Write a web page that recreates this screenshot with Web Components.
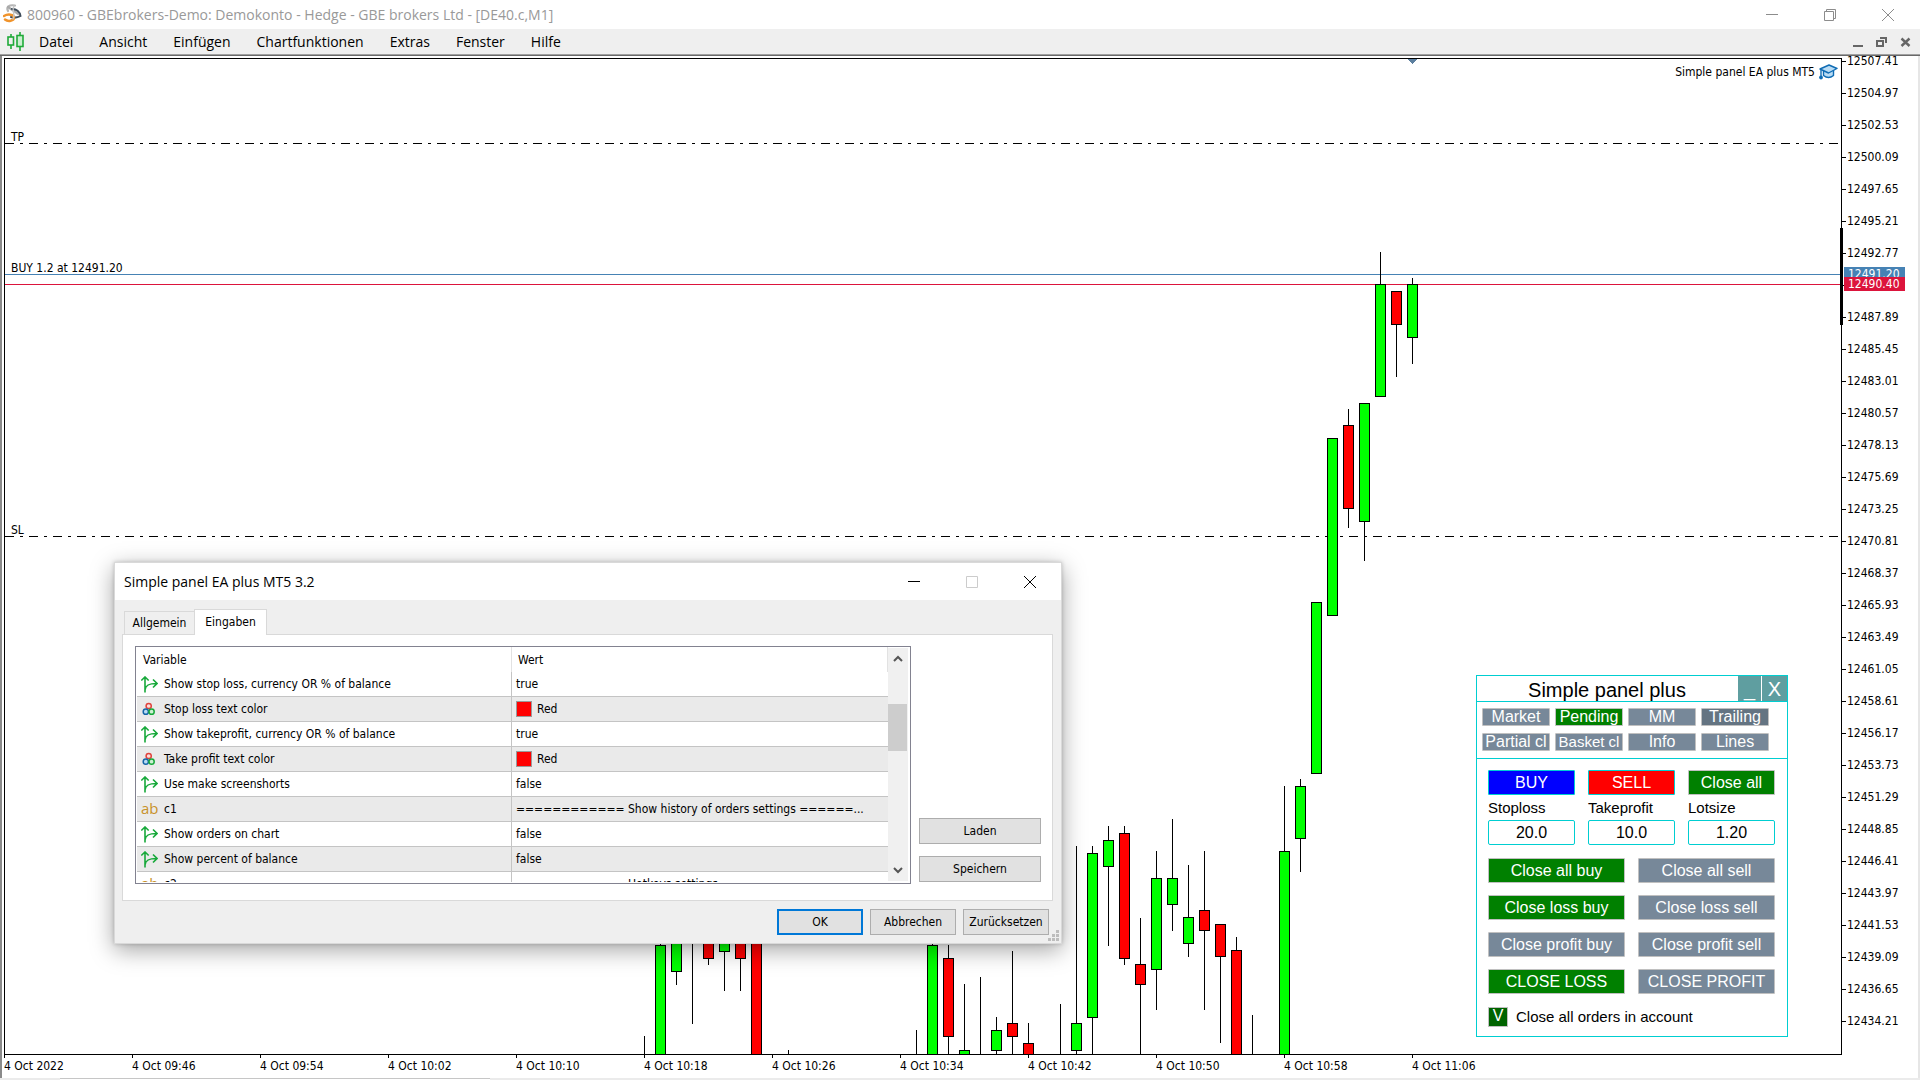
<!DOCTYPE html>
<html lang="de">
<head>
<meta charset="utf-8">
<title>800960 - GBEbrokers-Demo</title>
<style>
  html, body { margin: 0; height: 100%; }
  body { background: #fff; color: #000; overflow: hidden; font-family: "DejaVu Sans Condensed", "DejaVu Sans", sans-serif; font-size: 12px; }
</style>
</head>
<body>
<terminal-app></terminal-app>

<template id="t-app">
  <style>
    :host { display: flex; flex-direction: column; height: 100vh; position: relative; }
    price-chart { flex: 1; min-height: 0; }
    settings-dialog { position: absolute; left: 114px; top: 562px; }
    trade-panel { position: absolute; left: 1476px; top: 675px; }
    .strip { display: flex; height: 2px; background: #ebebeb; padding-left: 60px; }
    .strip i { width: 430px; background: #fff; border-top: 1px solid #c6c6c6; box-sizing: border-box; }
  </style>
  <app-titlebar>800960 - GBEbrokers-Demo: Demokonto - Hedge - GBE brokers Ltd - [DE40.c,M1]</app-titlebar>
  <app-menubar></app-menubar>
  <price-chart></price-chart>
  <div class="strip"><i></i></div>
  <trade-panel></trade-panel>
  <settings-dialog></settings-dialog>
</template>

<template id="t-titlebar">
  <style>
    :host { display: flex; align-items: center; height: 29px; background: #fff; color: #999; font: 15px/29px "Open Sans", "Noto Sans", sans-serif; }
    .logo { margin: 0 5px 4px 3px; }
    .name { flex: 1; font-size: 14px; line-height: 28px; white-space: nowrap; }
    button { border: 0; background: none; padding: 0; width: 58px; height: 28px; display: grid; place-items: center; }
    .caps { display: flex; padding-right: 3px; }
  </style>
  <svg class="logo" width="19" height="20" viewBox="0 0 19 20" fill="none" stroke-linecap="round">
    <path d="M5 8C3 4 6 1.500 12 2.500" stroke="#b5b5b5" stroke-width="2.200"/>
    <path d="M5 4C8 6 12 8.500 15 11" stroke="#a9a9a9" stroke-width="2.200"/>
    <path d="M9 6C13 5.500 17 9 17.500 13C14 15 11 15 8 14" stroke="#3d4b59" stroke-width="2"/>
    <path d="M1 13C5 10.500 11 11.500 11 14.500C11 18 5 19 2 16.500" stroke="#f0932b" stroke-width="2.500"/>
    <path d="M11 3C8 7 13 10 10 16" stroke="#c5c5c5" stroke-width="1.500"/>
  </svg>
  <span class="name"><slot></slot></span>
  <div class="caps">
    <button aria-label="Minimieren"><svg width="12" height="12" stroke="#8c8c8c"><path d="M0 5.500H12"/></svg></button>
    <button aria-label="Wiederherstellen"><svg width="12" height="12" fill="none" stroke="#8c8c8c"><path d="M.5 2.500H9.500V11.500H.5ZM2.500 2.500V.5H11.500V9.500H9.500"/></svg></button>
    <button aria-label="Schließen"><svg width="12" height="12" stroke="#8c8c8c"><path d="M0 0L12 12M12 0L0 12"/></svg></button>
  </div>
</template>

<template id="t-menubar">
  <style>
    :host { display: flex; align-items: center; height: 25px; background: #efefef; border-bottom: 1px solid #a0a0a0; box-shadow: 0 1px #696969; margin-bottom: 1px; }
    .doc { margin: 0 2px 0 7px; }
    nav { flex: 1; display: flex; }
    nav button { border: 0; background: none; padding: 0 13px; color: #000; font: 14px/24px "Open Sans", "Noto Sans", sans-serif; }
    .mdi { display: flex; gap: 13px; padding-right: 9px; }
    .mdi button { border: 0; background: none; padding: 0; width: 11px; height: 12px; display: grid; }
  </style>
  <svg class="doc" width="17" height="20" viewBox="0 0 17 20" fill="#efefef" stroke="#1faa38" stroke-width="1.600">
    <path d="M4 2V17"/><rect x="1" y="5" width="5.500" height="8"/>
    <path d="M13 0V19"/><rect x="10" y="3.500" width="6" height="11" fill="#c9efcf"/>
  </svg>
  <nav>
    <button>Datei</button><button>Ansicht</button><button>Einfügen</button><button>Chartfunktionen</button><button>Extras</button><button>Fenster</button><button>Hilfe</button>
  </nav>
  <div class="mdi">
    <button aria-label="Minimieren"><svg width="11" height="12"><path d="M1 10H11" stroke="#666" stroke-width="2"/></svg></button>
    <button aria-label="Wiederherstellen"><svg width="11" height="12" fill="none" stroke="#666" stroke-width="2"><path d="M1 5H7V10H1ZM4 2H10V7"/></svg></button>
    <button aria-label="Schließen"><svg width="11" height="12" stroke="#666" stroke-width="2.400"><path d="M1.500 2.500L9.500 10M9.500 2.500L1.500 10"/></svg></button>
  </div>
</template>

<template id="t-chart">
  <style>
    :host { display: grid; grid-template-columns: 1fr 76px; grid-template-rows: 1fr 23px; padding: 2px 0 0 2px; border-left: 2px solid #8a8a8a; border-right: 2px solid #e6e6e6; background: #fff; }
    .plot { position: relative; border: 1px solid #000; min-width: 0; min-height: 0; overflow: hidden; }
    .plot > svg { position: absolute; inset: 0; width: 100%; height: 100%; shape-rendering: crispEdges; }
    .expert { position: absolute; right: 3px; top: 5px; display: flex; align-items: center; gap: 4px; line-height: 16px; }
    .prices { position: relative; }
    .ladder { margin: -13px 0 0; padding: 0; list-style: none; }
    .ladder li { display: flex; align-items: center; height: 32px; gap: 1px; }
    .ladder li::before { content: ""; width: 4px; height: 1px; background: #000; }
    .range { position: absolute; left: -2px; top: 170px; width: 3px; height: 97px; background: #000; }
    .tag { position: absolute; left: 2px; width: 57px; padding-left: 4px; height: 14px; line-height: 14px; color: #fff; }
    .open { top: 209px; background: #4682b4; }
    .bid { top: 219px; background: #dc143c; }
    .times { grid-column: 1 / 3; display: flex; margin: 0; padding: 0; list-style: none; }
    .times li { flex: 0 0 128px; line-height: 16px; }
    .times li::before { content: ""; display: block; width: 1px; height: 3px; background: #000; }
  </style>
  <div class="plot">
    <svg><g class="levels"></g><g class="candles"></g><path d="M1402 0H1412L1407 5Z" fill="#5c7f9f"/></svg>
    <div class="expert"><span>Simple panel EA plus MT5</span>
      <svg width="19" height="16" viewBox="0 0 19 16" fill="#b9dcf5" stroke="#0f6cb4" stroke-width="1.400" stroke-linejoin="round">
        <path d="M4.500 6V11.500Q9.500 15.500 14.500 11.500V6"/><path d="M1 5L10 1L18 4.500L9.500 9Z"/><path d="M2 5.500V12" fill="none"/><circle cx="2" cy="13.500" r="1.200" fill="#0f6cb4"/>
      </svg></div>
  </div>
  <div class="prices">
    <ul class="ladder"></ul>
    <div class="range"></div>
    <div class="tag open">12491.20</div>
    <div class="tag bid">12490.40</div>
  </div>
  <ul class="times"></ul>
</template>

<template id="t-dialog">
  <style>
    :host { display: flex; flex-direction: column; width: 948px; height: 382px; box-sizing: border-box; border: 1px solid #d9d9d9; background: #efefef; box-shadow: 0 6px 22px rgba(0,0,0,.36), 0 0 4px rgba(0,0,0,.2); }
    header { display: flex; align-items: center; height: 37px; background: #fff; padding-left: 9px; }
    h1 { flex: 1; margin: 0; font: 14px/36px "Open Sans", "Noto Sans", sans-serif; }
    header button { width: 58px; height: 24px; border: 0; padding: 0; background: none; display: grid; place-items: center; }
    .caps { display: flex; padding-right: 2px; }
    .tabs { display: flex; align-items: flex-end; padding: 8px 9px 0; height: 26px; }
    .tabs button { position: relative; box-sizing: border-box; height: 23px; width: 71px; margin-right: -1px; padding: 0; border: 1px solid #d9d9d9; border-bottom: 0; background: #efefef; font: inherit; line-height: 22px; color: #000; }
    .tabs .on { height: 26px; width: 73px; background: #fff; z-index: 1; margin-bottom: -1px; padding-bottom: 2px; }
    .page { display: flex; gap: 8px; box-sizing: border-box; height: 267px; margin: 0 8px 0 7px; border: 1px solid #d9d9d9; background: #fff; padding: 11px 11px 16px 12px; }
    .list { flex: 1; display: flex; box-sizing: border-box; border: 1px solid #828290; padding: 0 1px 1px 0; overflow: hidden; }
    .view { flex: 1; overflow: hidden; padding-left: 1px; }
    table { width: 100%; table-layout: fixed; border-collapse: separate; border-spacing: 0; }
    th, td { box-sizing: border-box; height: 25px; padding: 0; text-align: left; font-weight: normal; line-height: 24px; white-space: nowrap; overflow: hidden; }
    th { padding-left: 6px; border-right: 1px solid #e2e2e2; }
    td { border-bottom: 1px solid #c4c4c4; padding-left: 4px; }
    td:first-child { border-right: 1px solid #c4c4c4; }
    tr:nth-child(even) td { background: #eaeaea; }
    td div { display: flex; align-items: center; height: 24px; gap: 6px; }
    td:last-child div { gap: 5px; }
    td i { display: block; flex: none; width: 17px; height: 17px; }
    td i svg { display: block; }
    td i.ab { font: 15px/15px "Open Sans", sans-serif; color: #c8922a; }
    .swatch { width: 14px; height: 14px; background: #f00; border: 1px solid #9a9a9a; }
    .bar { width: 20px; background: #f0f0f0; margin: 1px 1px 1px 0; display: flex; flex-direction: column; justify-content: space-between; align-items: center; position: relative; padding: 7px 0; box-sizing: border-box; }
    .thumb { position: absolute; top: 56px; left: 0; width: 19px; height: 47px; background: #cdcdcd; }
    .side { display: flex; flex-direction: column; justify-content: flex-end; gap: 12px; width: 122px; padding-bottom: 2px; }
    .cmd { box-sizing: border-box; height: 26px; padding: 0; border: 1px solid #adadad; background: #e1e1e1; font: inherit; color: #000; }
    footer { display: flex; justify-content: flex-end; gap: 7px; padding: 8px 12px 0 0; }
    footer .cmd { width: 86px; }
    footer .ok { border: 2px solid #0078d7; }
    .grip { position: absolute; right: 2px; bottom: 2px; }
  </style>
  <header><h1>Simple panel EA plus MT5 3.2</h1>
    <div class="caps">
      <button aria-label="Minimieren"><svg width="12" height="12" stroke="#000"><path d="M0 5.500H12"/></svg></button>
      <button aria-label="Maximieren" disabled><svg width="12" height="12" fill="none" stroke="#ccc"><path d="M.5 .5H11.500V11.500H.5Z"/></svg></button>
      <button aria-label="Schließen"><svg width="12" height="12" stroke="#000"><path d="M0 0L12 12M12 0L0 12"/></svg></button>
    </div>
  </header>
  <div class="tabs"><button>Allgemein</button><button class="on">Eingaben</button></div>
  <div class="page">
    <div class="list">
      <div class="view"><table>
        <colgroup><col style="width:375px"><col></colgroup>
        <thead><tr><th>Variable</th><th>Wert</th></tr></thead><tbody></tbody>
      </table></div>
      <div class="bar">
        <svg width="10" height="7" fill="none" stroke="#555" stroke-width="2"><path d="M1 6L5 2L9 6"/></svg>
        <div class="thumb"></div>
        <svg width="10" height="7" fill="none" stroke="#555" stroke-width="2"><path d="M1 1L5 5L9 1"/></svg>
      </div>
    </div>
    <div class="side"><button class="cmd">Laden</button><button class="cmd">Speichern</button></div>
  </div>
  <footer><button class="cmd ok">OK</button><button class="cmd">Abbrechen</button><button class="cmd">Zurücksetzen</button></footer>
  <svg class="grip" width="11" height="11" fill="#bdbdbd"><path d="M8 0h3v3h-3zM4 4h3v3h-3zM8 4h3v3h-3zM0 8h3v3h-3zM4 8h3v3h-3zM8 8h3v3h-3z"/></svg>
</template>

<template id="t-button">
  <style>
    :host { display: block; height: 25px; --bg: #778899; --edge: #c0c0c0; }
    :host([tone=green]) { --bg: #008000; }
    :host([tone=dark]) { --bg: #647482; }
    :host([tone=buy]) { --bg: #0000ff; --edge: #00ced1; }
    :host([tone=sell]) { --bg: #ff0000; --edge: #00ced1; }
    button { box-sizing: border-box; width: 100%; height: 100%; padding: 0; border: 1px solid var(--edge); border-radius: 1px; background: var(--bg); color: #fff; font: inherit; line-height: 16px; white-space: nowrap; display: flex; align-items: center; justify-content: center; overflow: hidden; }
  </style>
  <button><slot></slot></button>
</template>

<template id="t-panel">
  <style>
    :host { display: block; box-sizing: border-box; width: 312px; height: 362px; border: 1px solid #00ced1; background: #fff; font: 16px/18px "Liberation Sans", Arial, sans-serif; }
    header { display: flex; height: 25px; border-bottom: 1px solid #00ced1; gap: 1px; }
    h2 { flex: 1; margin: 0; text-align: center; font-size: 20px; line-height: 28px; font-weight: normal; }
    header button { border: 0; padding: 0; width: 23px; background: #5f9ea0; color: #fff; font: 20px/24px "Liberation Sans", Arial, sans-serif; }
    header .x { width: 25px; }
    .tabs { display: grid; grid-template-columns: repeat(4, 68px); gap: 7px 5px; padding: 6px 0 7px 5px; border-bottom: 1px solid #00ced1; }
    .tabs panel-button { height: 18px; }
    .small { font-size: 15px; }
    .trade { display: grid; grid-template-columns: repeat(3, 1fr); gap: 0 13px; padding: 11px 12px 13px 11px; }
    label { font-size: 15px; line-height: 25px; }
    input[type=text] { box-sizing: border-box; width: 100%; height: 25px; border: 1px solid #00ced1; border-radius: 2px; padding: 0; text-align: center; font: inherit; color: #000; background: #fff; }
    .close { display: grid; grid-template-columns: 1fr 1fr; gap: 12px 13px; padding: 0 12px 13px 11px; }
    .all { display: flex; align-items: center; gap: 8px; padding-left: 11px; line-height: 20px; }
    .tick { display: grid; width: 20px; height: 20px; }
    .tick > * { grid-area: 1 / 1; }
    .tick input { appearance: none; margin: 0; background: #006400; border: 1px solid #c0c0c0; }
    .tick span { color: #fff; font-size: 16px; line-height: 18px; text-align: center; z-index: 1; pointer-events: none; }
  </style>
  <header><h2>Simple panel plus</h2><button>_</button><button class="x">X</button></header>
  <div class="tabs">
    <panel-button>Market</panel-button><panel-button tone="green">Pending</panel-button><panel-button>MM</panel-button><panel-button tone="dark">Trailing</panel-button>
    <panel-button>Partial cl</panel-button><panel-button class="small">Basket cl</panel-button><panel-button>Info</panel-button><panel-button>Lines</panel-button>
  </div>
  <div class="trade">
    <panel-button tone="buy">BUY</panel-button><panel-button tone="sell">SELL</panel-button><panel-button tone="green">Close all</panel-button>
    <label for="sl">Stoploss</label><label for="tp">Takeprofit</label><label for="lot">Lotsize</label>
    <input type="text" id="sl" value="20.0"><input type="text" id="tp" value="10.0"><input type="text" id="lot" value="1.20">
  </div>
  <div class="close">
    <panel-button tone="green">Close all buy</panel-button><panel-button>Close all sell</panel-button>
    <panel-button tone="green">Close loss buy</panel-button><panel-button>Close loss sell</panel-button>
    <panel-button>Close profit buy</panel-button><panel-button>Close profit sell</panel-button>
    <panel-button tone="green">CLOSE LOSS</panel-button><panel-button>CLOSE PROFIT</panel-button>
  </div>
  <label class="all"><span class="tick"><input type="checkbox" checked><span>V</span></span>Close all orders in account</label>
</template>

<script>
class Templated extends HTMLElement {
  constructor() {
    super();
    this.attachShadow({ mode: "open" }).append(
      document.getElementById(this.constructor.template).content.cloneNode(true));
    this.build?.(this.shadowRoot);
  }
}

class PanelButton extends Templated { static template = "t-button"; }
class TradePanel extends Templated { static template = "t-panel"; }
class AppTitlebar extends Templated { static template = "t-titlebar"; }
class AppMenubar extends Templated { static template = "t-menubar"; }

class PriceChart extends Templated {
  static template = "t-chart";
  // x, high, body top, body bottom, low, colour (g, r or - for a wick only)
  static candles = [
    [644,1036,0,0,1055,"-"],[660,940,945,1060,1060,"g"],[676,900,900,972,985,"g"],[692,900,0,0,1024,"-"],
    [708,900,900,959,965,"r"],[724,900,900,952,991,"g"],[740,900,900,959,991,"r"],[756,900,900,1060,1060,"r"],
    [788,1050,0,0,1055,"-"],[916,1030,0,0,1055,"-"],[932,940,945,1060,1060,"g"],[948,945,958,1037,1055,"r"],
    [964,984,1050,1060,1060,"g"],[980,977,0,0,1055,"-"],[996,1017,1030,1051,1055,"g"],[1012,951,1023,1037,1055,"r"],
    [1028,1023,1043,1060,1060,"r"],[1060,1004,0,0,1055,"-"],[1076,846,1023,1051,1055,"g"],[1092,846,853,1018,1055,"g"],
    [1108,826,840,867,946,"g"],[1124,826,833,959,965,"r"],[1140,918,964,985,1055,"r"],[1156,851,878,970,1010,"g"],
    [1172,819,878,905,931,"g"],[1188,865,917,944,957,"g"],[1204,851,910,931,1010,"r"],[1220,924,924,957,1043,"r"],
    [1236,937,950,1060,1060,"r"],[1252,1015,0,0,1055,"-"],[1284,786,851,1060,1060,"g"],[1300,779,786,839,872,"g"],
    [1316,602,602,774,774,"g"],[1332,438,438,616,616,"g"],[1348,409,425,509,528,"r"],[1364,403,403,522,561,"g"],
    [1380,252,284,397,397,"g"],[1396,291,291,325,377,"r"],[1412,278,284,338,364,"g"]];
  build(root) {
    const left = 5, top = 59;
    const level = (y, colour, dash, label) =>
      `<line x1="0" x2="100%" y1="${y - top + .5}" y2="${y - top + .5}" stroke="${colour}" ${dash ? 'stroke-dasharray="9 6 3 6"' : ""}/>` +
      (label ? `<text x="6" y="${y - top - 2}">${label}</text>` : "");
    root.querySelector(".levels").innerHTML =
      level(143, "#000", true, "TP") + level(536, "#000", true, "SL") +
      level(274, "#4682b4", false, "BUY 1.2 at 12491.20") + level(284, "#dc143c", false);
    root.querySelector(".candles").innerHTML = PriceChart.candles.map(([x, high, a, b, low, c]) =>
      `<path d="M${x - left + .5} ${high - top}V${low - top}" stroke="#000"/>` +
      (c === "-" ? "" : `<rect x="${x - left - 4.5}" y="${a - top + .5}" width="10" height="${b - a - 1}" stroke="#000" fill="${c === "g" ? "#0f0" : "#f00"}"/>`)).join("");
    // The step hidden behind the bid tag keeps its tick only.
    root.querySelector(".ladder").innerHTML = Array.from({ length: 31 }, (_, i) =>
      `<li>${i === 7 ? "" : (12507.41 - i * 2.44).toFixed(2)}</li>`).join("");
    root.querySelector(".times").innerHTML =
      ["2022","09:46","09:54","10:02","10:10","10:18","10:26","10:34","10:42","10:50","10:58","11:06"]
        .map(t => `<li>4 Oct ${t}</li>`).join("");
  }
}

class SettingsDialog extends Templated {
  static template = "t-dialog";
  static icons = {
    bool: '<i><svg width="17" height="17" fill="none" stroke="#17a93a" stroke-width="1.600"><path d="M4 16.500V1.500M.3 4.500L4 1L7.700 4.500M4 14C4.500 9 8 7.500 15.500 7.500M12 3.500L16 7.500L12 11.500"/></svg></i>',
    color: '<i><svg width="17" height="17" stroke-width="1.500"><circle cx="7.700" cy="5" r="2.600" fill="#fbdcda" stroke="#e0433c"/><circle cx="4.800" cy="10.700" r="2.600" fill="#b9dcf5" stroke="#1565a8"/><circle cx="10.600" cy="10.700" r="2.600" fill="#cdf0d3" stroke="#17a93a"/></svg></i>',
    text: '<i class="ab">ab</i>'
  };
  build(root) {
    const rows = [
      ["bool", "Show stop loss, currency OR % of balance", "true"],
      ["color", "Stop loss text color", "Red"],
      ["bool", "Show takeprofit, currency OR % of balance", "true"],
      ["color", "Take profit text color", "Red"],
      ["bool", "Use make screenshorts", "false"],
      ["text", "c1", "============ Show history of orders settings ======..."],
      ["bool", "Show orders on chart", "false"],
      ["bool", "Show percent of balance", "false"],
      ["text", "c2", "============ Hotkeys settings ======..."]];
    root.querySelector("tbody").innerHTML = rows.map(([kind, name, value]) =>
      `<tr><td><div>${SettingsDialog.icons[kind]}${name}</div></td>` +
      `<td><div>${kind === "color" ? '<span class="swatch"></span>' : ""}${value}</div></td></tr>`).join("");
  }
}

class TerminalApp extends Templated { static template = "t-app"; }

customElements.define("panel-button", PanelButton);
customElements.define("trade-panel", TradePanel);
customElements.define("app-titlebar", AppTitlebar);
customElements.define("app-menubar", AppMenubar);
customElements.define("price-chart", PriceChart);
customElements.define("settings-dialog", SettingsDialog);
customElements.define("terminal-app", TerminalApp);
</script>
</body>
</html>
